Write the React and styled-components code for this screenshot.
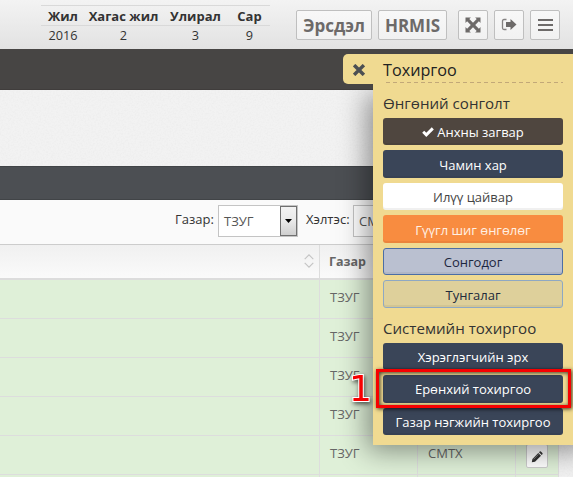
import React from "react";
import styled, { createGlobalStyle, css } from "styled-components";

const Global = createGlobalStyle`
  * { box-sizing: border-box; }
  body {
    margin: 0;
    overflow: hidden;
    font-family: "Open Sans", "Noto Sans", sans-serif;
    font-size: 13px;
    color: #333;
  }
`;

const Page = styled.div`
  position: relative;
  width: 573px;
  height: 477px;
  overflow: hidden;
  background: #f2f2f2;
  display: flex;
  flex-direction: column;
`;

const Header = styled.header`
  height: 49px;
  flex: none;
  display: flex;
  align-items: flex-start;
  padding: 5px 13px 0 41px;
  background: linear-gradient(#f3f3f3, #e2e2e2);
`;

const Period = styled.div`
  display: grid;
  grid-template-columns: 44px 77px 67px 41px;
  width: 229px;
  text-align: center;
  margin-right: 26px;
`;

const PeriodCell = styled.div`
  height: 20px;
  line-height: ${(p) => (p.$head ? 20 : 18)}px;
  font-size: ${(p) => (p.$head ? "13px" : "12.7px")};
  font-weight: ${(p) => (p.$head ? 700 : 400)};
  border-top: 1px solid #d9d9d9;
  white-space: nowrap;
`;

const HeaderButton = styled.button`
  width: ${(p) => p.$w}px;
  height: 30px;
  margin: 5px ${(p) => p.$gap ?? 6}px 0 0;
  padding: 0;
  display: flex;
  align-items: center;
  justify-content: center;
  flex: none;
  border: 1px solid #bfbfbf;
  border-radius: 2px;
  background: linear-gradient(#f8f8f8, #f1f1f1);
  color: #6d6a69;
  font: 700 17px "Open Sans", sans-serif;
`;

const Navbar = styled.nav`
  height: 41px;
  flex: none;
  background: #474544;
  border-bottom: 1px solid #403d3c;
`;

const Ribbon = styled.div`
  height: 76px;
  flex: none;
`;

const WidgetBar = styled.div`
  height: 34px;
  flex: none;
  background: #4c4f53;
  border: solid #414447;
  border-width: 1px 0;
`;

const Filters = styled.div`
  height: 45px;
  flex: none;
  display: flex;
  align-items: flex-start;
  padding: 5px 0 0 175px;
  background: #fafafa;
  border-bottom: 1px solid #ccc;
`;

const FilterLabel = styled.label`
  width: ${(p) => p.$w}px;
  flex: none;
  line-height: 29px;
  white-space: nowrap;
`;

const Select = styled.div`
  width: 80px;
  height: 32px;
  flex: none;
  display: flex;
  justify-content: space-between;
  margin-right: 8px;
  padding-left: 5px;
  border: 1px solid #c4c4c4;
  background: #fff;
  color: #555;
  line-height: 31px;
`;

const SelectArrow = styled.span`
  width: 17px;
  height: 30px;
  display: flex;
  align-items: center;
  justify-content: center;
  border: 1px solid #707070;
  background: linear-gradient(#f3f3f3, #e9e9e9 50%, #cfcfcf);
`;

const Table = styled.div`
  width: 559px;
  flex: none;
  border-right: 1px solid #ddd;
`;

const Row = styled.div`
  display: grid;
  grid-template-columns: 319px 98px 98px 1fr;
  height: 39px;
  background: #dff0d8;
  border-bottom: 1px solid #ddd;
`;

const HeadRow = styled(Row)`
  height: 35px;
  background: linear-gradient(#f0f0f0, #fafafa);
  border-bottom: 2px solid #dcdcdc;
  font-size: 12.5px;
  font-weight: 700;
`;

const Cell = styled.div`
  display: flex;
  align-items: center;
  justify-content: ${(p) => (p.$end ? "flex-end" : "flex-start")};
  padding: 0 ${(p) => (p.$end ? 5 : 0)}px ${(p) => (p.$head ? 1 : 5)}px ${(p) => (p.$head ? 9 : 10)}px;
  color: #666;
  & + & { border-left: 1px solid #ddd; }
`;

const EditButton = styled.button`
  width: 22px;
  height: 24px;
  margin-top: 7px;
  padding: 1px 0 0;
  display: grid;
  place-items: center;
  border: 1px solid #ccc;
  border-radius: 2px;
  background: #fff;
`;

const Texture = styled.svg`
  position: absolute;
  left: ${(p) => p.$x}px;
  top: ${(p) => p.$y}px;
  pointer-events: none;
`;

const Panel = styled.aside`
  position: absolute;
  left: 373px;
  top: 54px;
  width: 200px;
  height: 391px;
  padding: 0 10px;
  background: #f0da91;
`;

const PanelShadow = styled.div`
  position: absolute;
  left: 373px;
  top: 90px;
  width: 220px;
  height: 355px;
  box-shadow: -5px 5px 26px 1px rgba(0, 0, 0, 0.42);
  clip-path: inset(0 0 -50px -50px);
`;

const PanelTab = styled.div`
  position: absolute;
  left: -30px;
  top: 0;
  width: 31px;
  height: 30px;
  padding: 1px 0 0 1px;
  display: grid;
  place-items: center;
  border-radius: 5px 0 0 5px;
  background: #f0da91;
`;

const PanelTitle = styled.h2`
  margin: 0;
  height: 29px;
  line-height: 32px;
  font-size: 16.2px;
  font-weight: 400;
  color: #222;
`;

const TitleRule = styled.svg`
  display: block;
  margin-top: -1px;
  margin-left: 3px;
`;

const SectionTitle = styled.h3`
  margin: ${(p) => p.$top}px 0 0;
  height: ${(p) => p.$h}px;
  line-height: 22px;
  font-size: 15.1px;
  font-weight: 400;
  color: #333;
  white-space: nowrap;
`;

const tones = {
  brown: css`background: #4f463f; color: #fff;`,
  navy: css`background: #3a4558; color: #fff;`,
  white: css`background: #fff; color: #444; box-shadow: inset 0 -2px 0 rgba(0, 0, 0, 0.06);`,
  orange: css`background: #f88c40; color: #fff0e4;`,
  blue: css`background: #bac0d0; color: #1d2740; border: 1px solid #4c6ea5;`,
  sand: css`background: #ded09b; color: #222b3c; border: 1px solid #8ea8c3;`,
};

const OptionButton = styled.button`
  width: 180px;
  height: 27.4px;
  margin: 0 0 5.1px;
  padding: 1px 0 0;
  display: flex;
  align-items: center;
  justify-content: center;
  gap: 3px;
  border: 0;
  border-radius: 3px;
  box-shadow: inset 0 -2px 0 rgba(0, 0, 0, 0.05);
  font: 400 13px "Open Sans", sans-serif;
  white-space: nowrap;
  ${(p) => tones[p.$tone]}
`;

const Highlight = styled.div`
  position: absolute;
  left: 376px;
  top: 369px;
  width: 195px;
  height: 39px;
  border: 3px solid #f60000;
  box-shadow: 1px 1px 4px rgba(0, 0, 0, 0.75), inset 1px 1px 4px rgba(0, 0, 0, 0.75);
`;

const StepNumber = styled.span`
  position: absolute;
  left: 349px;
  top: 367px;
  font: 400 36px/43px "DejaVu Sans", sans-serif;
  color: #f60000;
  -webkit-text-stroke: 2px #fff;
  paint-order: stroke fill;
  filter: drop-shadow(1px 2px 2px rgba(0, 0, 0, 0.6));
`;

const Grain = ({ x, y, w, h }) => (
  <Texture $x={x} $y={y} width={w} height={h}>
    <filter id={`grain${y}`} x="0" y="0" width="100%" height="100%">
      <feTurbulence type="fractalNoise" baseFrequency="0.6" numOctaves="2" />
      <feColorMatrix values="0 0 0 0 0.5  0 0 0 0 0.5  0 0 0 0 0.5  0.2 0 0 0 -0.08" />
    </filter>
    <rect width={w} height={h} filter={`url(#grain${y})`} />
  </Texture>
);

const ExpandIcon = () => (
  <svg width="16" height="16" viewBox="0 0 16 16" fill="#6d6a69">
    <path d="M.5.5h5.4L4.3 2.1 8 5.8l3.700-3.700L10.100.5h5.400v5.400l-1.600-1.600L10.200 8l3.700 3.700 1.600-1.600v5.400h-5.400l1.600-1.600L8 10.200l-3.700 3.700 1.600 1.600H.5v-5.400l1.600 1.600L5.800 8 2.100 4.300.5 5.900z" />
  </svg>
);

const ExitIcon = () => (
  <svg width="16" height="14" viewBox="0 0 16 14">
    <path d="M5.500 1.500H3Q1.500 1.500 1.500 3v7Q1.500 11.500 3 11.500h2.500" fill="none" stroke="#858282" strokeWidth="1.300" />
    <path d="M5 4h4.500V1l6 5.500-6 5.500V9H5z" fill="#6d6a69" />
  </svg>
);

const MenuIcon = () => (
  <svg width="15" height="12" viewBox="0 0 15 12" fill="#6d6a69">
    <path d="M0 0h15v2H0zM0 5h15v2H0zM0 10h15v2H0z" />
  </svg>
);

const CloseIcon = () => (
  <svg width="12" height="12" viewBox="0 0 12 12">
    <path d="M2.300 2.300l7.400 7.400M9.700 2.300L2.300 9.700" stroke="#4c4f53" strokeWidth="3.400" strokeLinecap="square" />
  </svg>
);

const CheckIcon = () => (
  <svg width="12" height="10" viewBox="0 0 12 10">
    <path d="M1.200 4.800l3.100 3.100L10.800 1.400" fill="none" stroke="#fff" strokeWidth="2.900" />
  </svg>
);

const SortIcon = () => (
  <svg width="10" height="14" viewBox="0 0 10 14" fill="none" stroke="#c3c3c3" strokeWidth="1.100">
    <path d="M.7 5.200L5 .9l4.300 4.300M.7 8.800L5 13.100l4.300-4.300" />
  </svg>
);

const PencilIcon = () => (
  <svg width="12" height="12" viewBox="0 0 12 12" fill="#333">
    <path d="M7.300 2l2.700 2.700-6 6L.8 11.300l.6-3.300zM8 1.300L8.700.6q.6-.5 1.200 0l1.500 1.500q.5.6 0 1.200l-.7.7z" />
    <path d="M2.500 8.300l5-5" stroke="#bbb" strokeWidth=".6" />
  </svg>
);

const rows = [
  { unit: "ТЗУГ" },
  { unit: "ТЗУГ" },
  { unit: "ТЗУГ" },
  { unit: "ТЗУГ" },
  { unit: "ТЗУГ", division: "СМТХ", editable: true },
  {},
];

const themes = [
  ["brown", "Анхны загвар"],
  ["navy", "Чамин хар"],
  ["white", "Илүү цайвар"],
  ["orange", "Гүүгл шиг өнгөлөг"],
  ["blue", "Сонгодог"],
  ["sand", "Тунгалаг"],
];

const settings = ["Хэрэглэгчийн эрх", "Ерөнхий тохиргоо", "Газар нэгжийн тохиргоо"];

export default function App() {
  return (
    <Page>
      <Global />
      <Header>
        <Period>
          {["Жил", "Хагас жил", "Улирал", "Сар"].map((t) => (
            <PeriodCell key={t} $head>{t}</PeriodCell>
          ))}
          {["2016", "2", "3", "9"].map((t) => (
            <PeriodCell key={t}>{t}</PeriodCell>
          ))}
        </Period>
        <HeaderButton $w={76}>Эрсдэл</HeaderButton>
        <HeaderButton $w={69} $gap={11}>HRMIS</HeaderButton>
        <HeaderButton $w={30}><ExpandIcon /></HeaderButton>
        <HeaderButton $w={30}><ExitIcon /></HeaderButton>
        <HeaderButton $w={30}><MenuIcon /></HeaderButton>
      </Header>
      <Navbar />
      <Ribbon />
      <WidgetBar />
      <Filters>
        <FilterLabel $w={43}>Газар:</FilterLabel>
        <Select>
          ТЗУГ
          <SelectArrow>
            <svg width="7" height="4" viewBox="0 0 7 4"><path d="M0 0h7L3.500 4z" /></svg>
          </SelectArrow>
        </Select>
        <FilterLabel $w={47}>Хэлтэс:</FilterLabel>
        <Select>СМТХ</Select>
      </Filters>
      <Table>
        <HeadRow>
          <Cell $head $end><SortIcon /></Cell>
          <Cell $head>Газар</Cell>
          <Cell />
          <Cell />
        </HeadRow>
        {rows.map((row, i) => (
          <Row key={i}>
            <Cell />
            <Cell>{row.unit}</Cell>
            <Cell>{row.division}</Cell>
            <Cell>{row.editable && <EditButton><PencilIcon /></EditButton>}</Cell>
          </Row>
        ))}
      </Table>
      <Grain x={0} y={90} w={573} h={76} />
      <Grain x={559} y={445} w={14} h={32} />
      <PanelShadow />
      <Panel>
        <PanelTab><CloseIcon /></PanelTab>
        <PanelTitle>Тохиргоо</PanelTitle>
        <TitleRule width="177" height="1">
          <path d="M0 .5h177" stroke="#c2a878" strokeDasharray="4 3" />
        </TitleRule>
        <SectionTitle $top={9} $h={25.9}>Өнгөний сонголт</SectionTitle>
        {themes.map(([tone, label], i) => (
          <OptionButton key={label} $tone={tone}>
            {i === 0 && <CheckIcon />}
            {label}
          </OptionButton>
        ))}
        <SectionTitle $top={9} $h={26}>Системийн тохиргоо</SectionTitle>
        {settings.map((label) => (
          <OptionButton key={label} $tone="navy">{label}</OptionButton>
        ))}
      </Panel>
      <Highlight />
      <StepNumber>1</StepNumber>
    </Page>
  );
}
